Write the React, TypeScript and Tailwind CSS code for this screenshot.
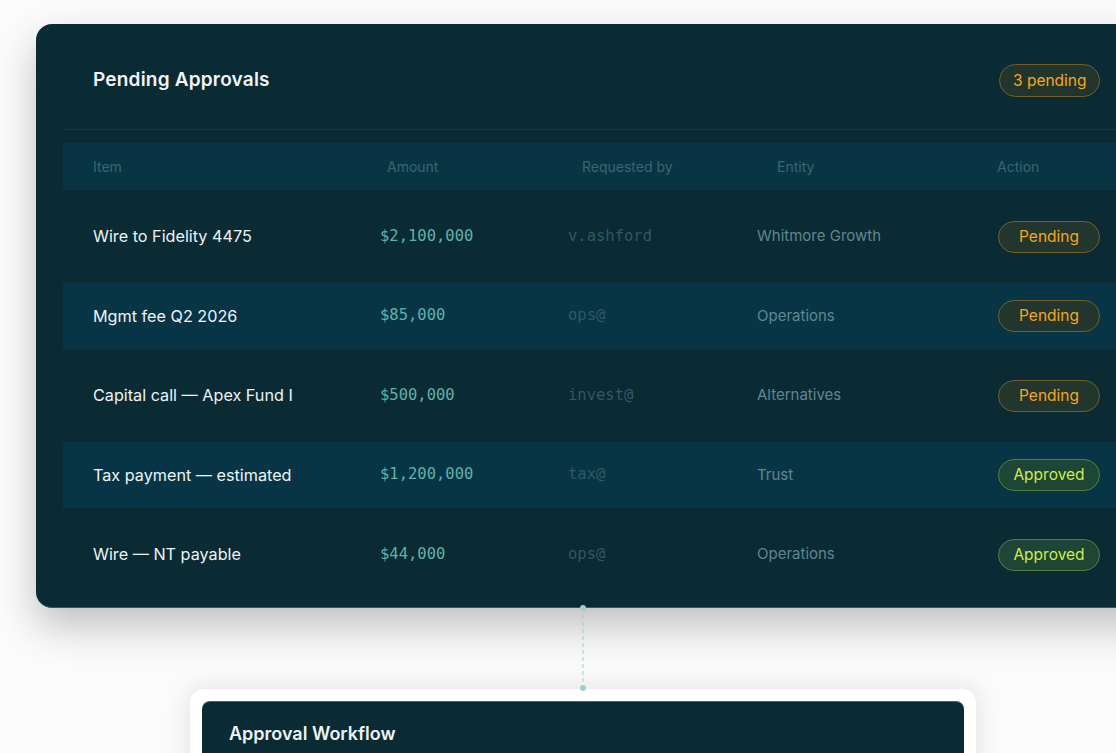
import React from "react";

type Row = {
  item: string;
  amount: string;
  by: string;
  entity: string;
  status: "Pending" | "Approved";
  shaded?: boolean;
};

const rows: Row[] = [
  { item: "Wire to Fidelity 4475", amount: "$2,100,000", by: "v.ashford", entity: "Whitmore Growth", status: "Pending" },
  { item: "Mgmt fee Q2 2026", amount: "$85,000", by: "ops@", entity: "Operations", status: "Pending", shaded: true },
  { item: "Capital call — Apex Fund I", amount: "$500,000", by: "invest@", entity: "Alternatives", status: "Pending" },
  { item: "Tax payment — estimated", amount: "$1,200,000", by: "tax@", entity: "Trust", status: "Approved", shaded: true },
  { item: "Wire — NT payable", amount: "$44,000", by: "ops@", entity: "Operations", status: "Approved" },
];

const sans = "font-['Inter','Noto_Sans',sans-serif]";
const mono = "font-['DejaVu_Sans_Mono','Liberation_Mono',monospace]";

function StatusPill({ status }: { status: Row["status"] }) {
  if (status === "Approved") {
    return (
      <span className="flex h-[32px] w-[102px] items-center justify-center rounded-full border border-[#537f3e] bg-[#1d4636] text-[15.5px] text-[#d2ec46]">
        Approved
      </span>
    );
  }
  return (
    <span className="flex h-[32px] w-[102px] items-center justify-center rounded-full border border-[#735e28] bg-[#22362e] text-[15.5px] text-[#f7a51f]">
      Pending
    </span>
  );
}

export default function App() {
  return (
    <div className={`${sans} relative h-[753px] w-[1116px] overflow-hidden bg-[#fbfbfb]`}>
      <div className="pl-[36px] pt-[24px]">
        {/* Approvals card */}
        <div className="w-[1121px] rounded-[16px] border-b border-[#2c5c63] bg-[#0a2a34] pb-[19px] shadow-[0_18px_40px_rgba(0,0,0,0.24)]">
          <div className="flex h-[105px] items-center justify-between px-[57px] pt-[8px]">
            <h2 className="text-[19px] font-semibold tracking-[0.2px] text-[#f1f5f6]">Pending Approvals</h2>
            <span className="flex h-[33px] items-center rounded-full border border-[#735e28] bg-[#22352c] px-[12.5px] text-[15.5px] text-[#f7a51f]">
              3 pending
            </span>
          </div>

          <div className="mx-[27px] border-t border-[#12394a]" />

          <div className="mx-[27px] mt-[13px] flex flex-col gap-[13.5px]">
            {/* column heads */}
            <div className="flex h-[47px] items-center bg-[#083444] pl-[30px] text-[14px] text-[#3a6672]">
              <span className="w-[294px]">Item</span>
              <span className="w-[195px]">Amount</span>
              <span className="w-[195px]">Requested by</span>
              <span className="w-[220px]">Entity</span>
              <span>Action</span>
            </div>

            {rows.map((r) => (
              <div
                key={r.item}
                className={`flex h-[66px] items-center pl-[30px] ${r.shaded ? "bg-[#083545]" : ""}`}
              >
                <span className="w-[287px] text-[16.2px] text-[#eef3f4]">{r.item}</span>
                <span className={`${mono} w-[188px] text-[15.5px] text-[#5fb2a8]`}>{r.amount}</span>
                <span className={`${mono} w-[189px] text-[15.5px] text-[#2f5964]`}>{r.by}</span>
                <span className="w-[241px] text-[15px] text-[#5e8792]">{r.entity}</span>
                <StatusPill status={r.status} />
              </div>
            ))}
          </div>
        </div>
      </div>

      {/* connector + workflow card */}
      <div className="ml-[189px] flex w-[788px] flex-col items-center">
        <svg width="10" height="88" viewBox="0 0 10 88" className="relative z-10 -mb-[4px] -mt-[4px]">
          <line x1="5" y1="4" x2="5" y2="84" stroke="#9ad3c6" strokeWidth="1" strokeDasharray="4 3" />
          <circle cx="5" cy="4" r="3" fill="#9ad3c6" />
          <circle cx="5" cy="84" r="3" fill="#9ad3c6" />
        </svg>
        <div className="w-[788px] rounded-t-[14px] border border-[#eeeeee] bg-white px-[12px] pt-[12px] shadow-[0_0_28px_rgba(0,0,0,0.10)]">
          <div className="h-[80px] rounded-t-[8px] border-t border-[#3a6870] bg-[#0a2a34] px-[27px] pt-[18px]">
            <h3 className="text-[18px] font-semibold text-[#eef3f4]">Approval Workflow</h3>
          </div>
        </div>
      </div>
    </div>
  );
}
